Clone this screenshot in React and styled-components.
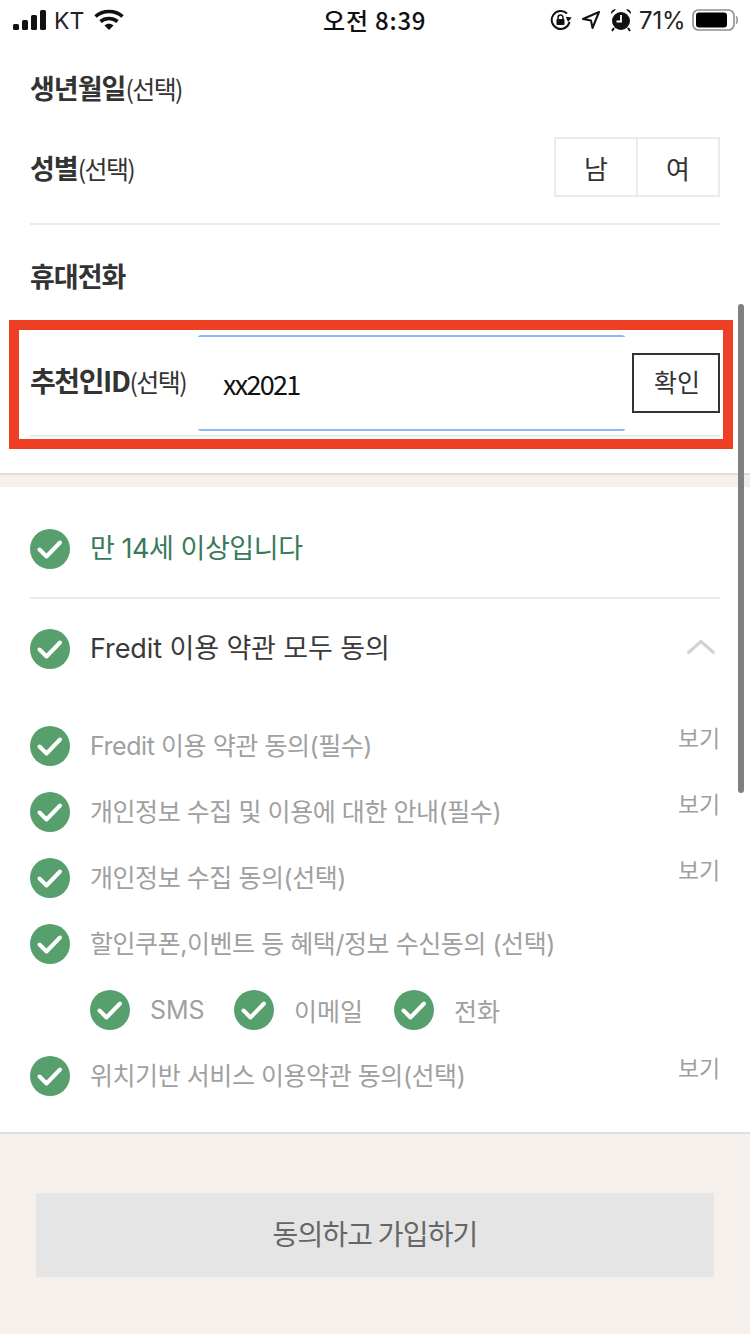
import React from 'react';
import styled, { createGlobalStyle } from 'styled-components';

const Global = createGlobalStyle`
  html, body { margin: 0; padding: 0; background: #fff; }
  * { box-sizing: border-box; }
  body { font-family: "Noto Sans CJK KR", "Noto Sans", sans-serif; width: 750px; }
`;
const Page = styled.div`position: relative; width: 750px; height: 1334px; overflow: hidden; display: flex; flex-direction: column; background: #fff; color: #333;`;
const StatusBar = styled.div`height: 40px; flex: none; position: relative; display: flex; align-items: center; justify-content: space-between; padding: 0 12px 0 13px; color: #111; font-family: Inter, "Noto Sans CJK KR", sans-serif;`;
const StatusSide = styled.div`display: flex; align-items: center; gap: ${p => p.$gap}px;`;
const Carrier = styled.span`font-size: 23px; font-weight: 400; color: #222; margin: 1px 1px 0 -1px;`;
const Clock = styled.span`position: absolute; left: 323px; top: 4px; font-size: 24px; font-weight: 500; line-height: 32px; letter-spacing: .8px; font-family: "Noto Sans CJK KR", sans-serif;`;
const Battery = styled.span`font-size: 24px; color: #222; width: 45px; margin: 0 -1px 0 -2px; white-space: nowrap; letter-spacing: -.2px;`;

const FormArea = styled.div`padding: 0 30px; display: flex; flex-direction: column;`;
const PlainRow = styled.div`height: ${p => p.$h}px; display: flex; align-items: center; justify-content: space-between;`;
const Label = styled.div`font-size: 27px; font-weight: 700; letter-spacing: -1px; color: #333; white-space: nowrap;`;
const Optional = styled.span`font-weight: 400; font-size: 25px; letter-spacing: -1.6px;`;
const Segments = styled.div`display: flex; width: 166px; height: 60px; border: 2px solid #ebebeb;`;
const Segment = styled.div`flex: 1; display: flex; align-items: center; justify-content: center; font-size: 26px; color: #333; & + & { border-left: 2px solid #ebebeb; }`;
const Rule = styled.div`height: 2px; background: #ebebeb; flex: none;`;
const PhoneLabel = styled(Label)`margin-top: 2px;`;
const RefRow = styled.div`position: relative; height: 102px; margin-top: 12px; display: flex; align-items: flex-start; border-bottom: 2px solid #ebebeb;`;
const RefLabel = styled(Label)`width: 168px; font-size: 28px; letter-spacing: -1.4px; margin-top: 25px;`;
const Field = styled.div`width: 427px; height: 96px; border-top: 2px solid #8ab8f5; border-bottom: 2px solid #8ab8f5; border-radius: 4px / 2px; padding-left: 25px; display: flex; align-items: center; font-size: 27px; color: #111; letter-spacing: -1.7px; font-family: "Noto Sans CJK KR", sans-serif;`;
const Confirm = styled.div`width: 88px; height: 60px; margin: 18px 0 0 7px; border: 2px solid #333; display: flex; align-items: center; justify-content: center; font-size: 25px; padding: 0 0 4px 2px; color: #333;`;
const RedFrame = styled.div`position: absolute; left: -21px; top: -15px; width: 724px; height: 129px; border: 10px solid #ec3f24; pointer-events: none;`;

const SectionEnd = styled.div`height: 14px; margin-top: 36px; background: #f5f0ec; border-top: 2px solid #dedede; flex: none;`;
const Terms = styled.div`padding: 0 30px; display: flex; flex-direction: column;`;
const latin = `font-family: Inter, "Noto Sans CJK KR", sans-serif;`;
const RowText = styled.span`margin-top: ${p => p.$lift}px; white-space: nowrap;`;
const AgeRow = styled.div`height: 110px; padding-top: 14px; display: flex; align-items: center; gap: 20px; font-size: 27px; color: #377a58; ${latin} letter-spacing: -.45px;`;
const AllRow = styled.div`height: 100px; display: flex; align-items: center; gap: 20px; font-size: 27px; color: #3a3a3a; letter-spacing: -.1px; ${latin}`;
const Chevron = styled.svg`margin-left: auto; width: 32px; height: 20px; margin-right: 4px; margin-top: -2px;`;
const Items = styled.div`padding-top: 14px; display: flex; flex-direction: column;`;
const Item = styled.div`height: 66px; display: flex; align-items: center; gap: 20px; font-size: 25px; color: #a0a0a0; letter-spacing: -.45px; ${latin}`;
const View = styled.span`margin-left: auto; font-size: 23px; color: #9f9f9f; margin-top: -19px; letter-spacing: -.2px;`;
const SubRow = styled.div`height: 66px; display: flex; align-items: center; padding-left: 60px; font-size: 25px; color: #a0a0a0; ${latin}`;
const SubOption = styled.div`display: flex; align-items: center; gap: 20px; width: ${p => p.$w}px;`;
const Footer = styled.div`margin-top: 23px; flex: 1; background: #f5f0ec; border-top: 2px solid #dedede; padding: 59px 36px 0;`;
const Submit = styled.div`height: 84px; background: #e5e5e5; display: flex; align-items: center; justify-content: center; font-size: 28px; color: #666; letter-spacing: -.8px; padding-bottom: 4px;`;
const Scrollbar = styled.div`position: absolute; left: 738px; top: 304px; width: 6px; height: 489px; border-radius: 3px; background: #808080;`;

const Check = () => (
  <svg width="40" height="40" viewBox="0 0 40 40" style={{ flex: 'none' }}>
    <circle cx="20" cy="20" r="20" fill="#589f6e" />
    <path d="M9.5 20.5 L16.5 27.5 L30 13.5" fill="none" stroke="#fff" strokeWidth="4" strokeLinecap="round" strokeLinejoin="round" />
  </svg>
);
const Signal = () => (
  <svg width="33" height="20" viewBox="0 0 33 20" fill="#111">
    <rect x="0" y="14" width="6" height="6" rx="1.5" /><rect x="9" y="10" width="6" height="10" rx="1.5" />
    <rect x="18" y="5" width="6" height="15" rx="1.5" /><rect x="27" y="0" width="6" height="20" rx="1.5" />
  </svg>
);
const Wifi = () => (
  <svg width="30" height="22" viewBox="0 0 30 22" fill="none" stroke="#111" strokeWidth="3.6">
    <path d="M1.5 7.5C9 .8 21 .8 28.5 7.5" /><path d="M6.5 12.5c4.8-4 12.2-4 17 0" /><path d="M15 21l-4.5-4.6c2.4-2.2 6.6-2.2 9 0z" fill="#111" stroke="none" />
  </svg>
);
const Lock = () => (
  <svg width="22" height="22" viewBox="0 0 22 22" fill="none">
    <path d="M19.5 13A9 9 0 1 1 17 4.5" stroke="#111" strokeWidth="2" /><path d="M15.5 8h6l-3 5z" fill="#111" transform="rotate(8 18 10)" />
    <rect x="6.5" y="10" width="8" height="6" rx="1" fill="#111" /><path d="M8 10V8.5a2.5 2.5 0 0 1 5 0V10" stroke="#111" strokeWidth="1.5" />
  </svg>
);
const Arrow = () => (
  <svg width="20" height="20" viewBox="0 0 20 20" fill="none" stroke="#111" strokeWidth="2" strokeLinejoin="round">
    <path d="M18 2 2 9l8 1.5L11.5 18z" />
  </svg>
);
const Alarm = () => (
  <svg width="22" height="24" viewBox="0 0 22 24" fill="#111">
    <circle cx="11" cy="13" r="9" /><path d="M1 6a4 4 0 0 1 5-4.5zM21 6a4 4 0 0 0-5-4.5z" />
    <path d="M11 7v6.5H6.5" stroke="#fff" strokeWidth="1.8" fill="none" />
    <path d="M4 20l-2 3M18 20l2 3" stroke="#111" strokeWidth="2" />
  </svg>
);
const BatteryIcon = () => (
  <svg width="46" height="24" viewBox="0 0 46 24">
    <rect x="1" y="2" width="41" height="20" rx="5.5" fill="none" stroke="#8e8e8e" strokeWidth="1.6" />
    <rect x="4" y="4.5" width="31" height="15" rx="3" fill="#000" />
    <path d="M44 8.5c1.6.8 1.6 6.2 0 7" fill="none" stroke="#8e8e8e" strokeWidth="1.5" />
  </svg>
);

const terms = [
  ['Fredit 이용 약관 동의(필수)', true],
  ['개인정보 수집 및 이용에 대한 안내(필수)', true],
  ['개인정보 수집 동의(선택)', true],
  ['할인쿠폰,이벤트 등 혜택/정보 수신동의 (선택)', false],
];

export default function App() {
  return (
    <Page>
      <Global />
      <StatusBar>
        <StatusSide $gap={9}><Signal /><Carrier>KT</Carrier><Wifi /></StatusSide>
        <Clock>오전 8:39</Clock>
        <StatusSide $gap={9}><Lock /><Arrow /><Alarm /><Battery>71%</Battery><BatteryIcon /></StatusSide>
      </StatusBar>
      <FormArea>
        <PlainRow $h={94}><Label>생년월일<Optional>(선택)</Optional></Label></PlainRow>
        <PlainRow $h={66}><Label>성별<Optional>(선택)</Optional></Label><Segments><Segment>남</Segment><Segment>여</Segment></Segments></PlainRow>
        <PlainRow $h={23} />
        <Rule />
        <PlainRow $h={98}><PhoneLabel>휴대전화</PhoneLabel></PlainRow>
        <RefRow>
          <RefLabel>추천인ID<Optional>(선택)</Optional></RefLabel>
          <Field>xx2021</Field>
          <Confirm>확인</Confirm>
          <RedFrame />
        </RefRow>
      </FormArea>
      <SectionEnd />
      <Terms>
        <AgeRow><Check /><RowText $lift={-5}>만 14세 이상입니다</RowText></AgeRow>
        <Rule />
        <AllRow>
          <Check /><RowText $lift={-6}>Fredit 이용 약관 모두 동의</RowText>
          <Chevron viewBox="0 0 32 20" fill="none" stroke="#d2d2d2" strokeWidth="3" strokeLinecap="round" strokeLinejoin="round"><path d="M4.5 14.5 17 3.5 29.5 14.5" /></Chevron>
        </AllRow>
        <Items>
          {terms.map(([t, v]) => (
            <Item key={t}><Check /><RowText $lift={-4}>{t}</RowText>{v && <View>보기</View>}</Item>
          ))}
          <SubRow>
            <SubOption $w={144}><Check />SMS</SubOption>
            <SubOption $w={160}><Check />이메일</SubOption>
            <SubOption $w={120}><Check />전화</SubOption>
          </SubRow>
          <Item><Check /><RowText $lift={-4}>위치기반 서비스 이용약관 동의(선택)</RowText><View>보기</View></Item>
        </Items>
      </Terms>
      <Footer><Submit>동의하고 가입하기</Submit></Footer>
      <Scrollbar />
    </Page>
  );
}
